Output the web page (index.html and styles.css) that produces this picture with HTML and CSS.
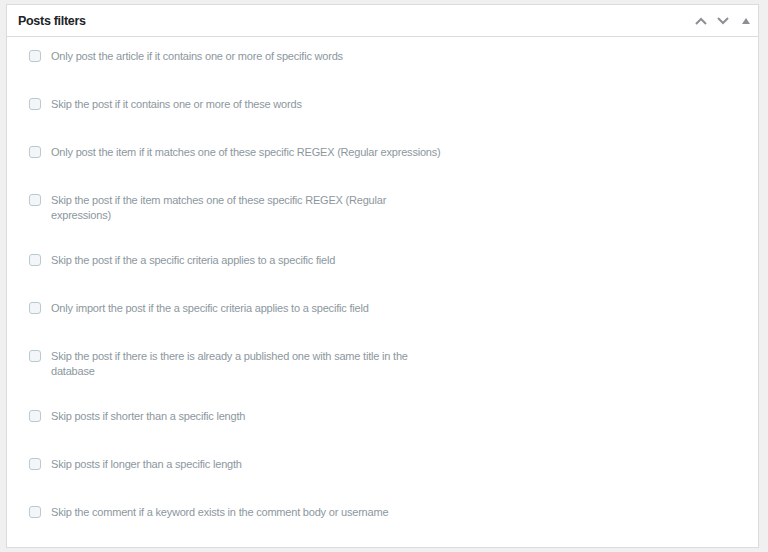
FILE: index.html
```html
<!DOCTYPE html>
<html lang="en">
<head>
    <meta charset="UTF-8">
    <meta name="viewport" content="width=device-width, initial-scale=1.0">
    <title>Posts filters</title>
    <link rel="stylesheet" href="styles.css">
</head>
<body>
    <div class="postbox">
        <div class="postbox-header">
            <h2>Posts filters</h2>
            <div class="handle-actions">
                <button class="handle" aria-label="Move up">
                    <svg width="14" height="10" viewBox="0 0 14 10"><path d="M2 8 L7 3 L12 8" fill="none" stroke="#8c8f94" stroke-width="2"/></svg>
                </button>
                <button class="handle" aria-label="Move down">
                    <svg width="14" height="10" viewBox="0 0 14 10"><path d="M2 2 L7 7 L12 2" fill="none" stroke="#8c8f94" stroke-width="2"/></svg>
                </button>
                <button class="handle toggle" aria-label="Toggle panel">
                    <svg width="8" height="6" viewBox="0 0 8 6"><path d="M0 6 L4 0 L8 6 Z" fill="#8c8f94"/></svg>
                </button>
            </div>
        </div>
        <ul class="filters">
            <li><label><input type="checkbox"><span>Only post the article if it contains one or more of specific words</span></label></li>
            <li><label><input type="checkbox"><span>Skip the post if it contains one or more of these words</span></label></li>
            <li><label><input type="checkbox"><span>Only post the item if it matches one of these specific REGEX (Regular expressions)</span></label></li>
            <li><label><input type="checkbox"><span>Skip the post if the item matches one of these specific REGEX (Regular expressions)</span></label></li>
            <li><label><input type="checkbox"><span>Skip the post if the a specific criteria applies to a specific field</span></label></li>
            <li><label><input type="checkbox"><span>Only import the post if the a specific criteria applies to a specific field</span></label></li>
            <li><label><input type="checkbox"><span>Skip the post if there is there is already a published one with same title in the database</span></label></li>
            <li><label><input type="checkbox"><span>Skip posts if shorter than a specific length</span></label></li>
            <li><label><input type="checkbox"><span>Skip posts if longer than a specific length</span></label></li>
            <li><label><input type="checkbox"><span>Skip the comment if a keyword exists in the comment body or username</span></label></li>
        </ul>
    </div>
</body>
</html>
```

FILE: styles.css
```css
body {
    margin: 0;
    padding: 4px 9px 0 6px;
    background-color: #f0f0f1;
    font-family: "Liberation Sans", Arial, sans-serif;
}

.postbox {
    background: #fff;
    border: 1px solid #dcdcde;
    box-shadow: 0 1px 1px rgba(0, 0, 0, 0.04);
    height: 542px;
}

.postbox-header {
    display: flex;
    align-items: center;
    justify-content: space-between;
    height: 31px;
    border-bottom: 1px solid #dcdcde;
}

.postbox-header h2 {
    margin: 0 0 0 11px;
    font-size: 12.5px;
    letter-spacing: -0.3px;
    font-weight: bold;
    color: #1d2327;
}

.handle-actions {
    display: flex;
    align-items: center;
}

.handle {
    background: none;
    border: none;
    padding: 0;
    width: 22px;
    height: 30px;
    display: flex;
    align-items: center;
    justify-content: center;
    cursor: pointer;
}

.handle.toggle {
    width: 24px;
}

.filters {
    list-style: none;
    margin: 0;
    padding: 12px 0 0 21px;
}

.filters li {
    margin-bottom: 30px;
}

.filters label {
    display: flex;
    align-items: flex-start;
    font-size: 11px;
    letter-spacing: -0.2px;
    line-height: 15px;
    color: #8c979e;
    cursor: pointer;
}

.filters span {
    max-width: 392px;
}

.filters input[type="checkbox"] {
    appearance: none;
    -webkit-appearance: none;
    width: 12px;
    height: 12px;
    margin: 1px 10px 5px 1px;
    border: 1px solid #bcc8d0;
    border-radius: 3px;
    background: #f3f6f8;
    flex-shrink: 0;
}
```
